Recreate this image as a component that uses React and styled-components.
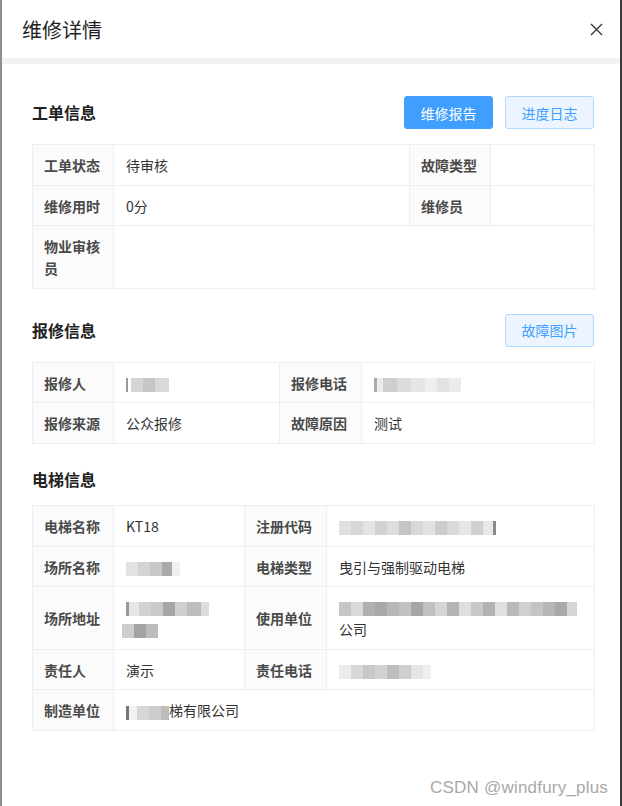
import React from 'react';
import styled, { createGlobalStyle } from 'styled-components';

const GlobalStyle = createGlobalStyle`
    html, body {
        margin: 0;
        padding: 0;
        background: #fff;
    }
    * {
        box-sizing: border-box;
    }
    body {
        font-family: "Noto Sans CJK SC", "Liberation Sans", sans-serif;
    }
`;

const Dialog = styled.div`
    position: relative;
    display: flex;
    flex-direction: column;
    width: 622px;
    height: 806px;
    border-left: 2px solid #8f8f8f;
    border-right: 2px solid #3a3a3a;
    background: #fff;
    overflow: hidden;
`;

const Header = styled.div`
    display: flex;
    align-items: center;
    justify-content: space-between;
    height: 58px;
    padding: 0 14px 0 20px;
`;

const Title = styled.div`
    font-size: 20px;
    color: #1f1f1f;
`;

const CloseButton = styled.button`
    display: flex;
    align-items: center;
    justify-content: center;
    width: 20px;
    height: 20px;
    padding: 0;
    border: none;
    background: transparent;
    color: #333;
    cursor: pointer;
`;

const Divider = styled.div`
    height: 6px;
    background: #f2f2f2;
`;

const Body = styled.div`
    display: flex;
    flex-direction: column;
    padding: 32px 26px 0 30px;
`;

const Section = styled.div`
    display: flex;
    flex-direction: column;
    gap: 15px;
    margin-top: ${props => props.first ? '0' : '25px'};
`;

const SectionHead = styled.div`
    display: flex;
    align-items: center;
    justify-content: space-between;
    min-height: ${props => props.withButtons ? '33px' : '21px'};
`;

const SectionTitle = styled.div`
    font-size: 16px;
    font-weight: 700;
    color: #222;
    line-height: 21px;
`;

const Actions = styled.div`
    display: flex;
    gap: 12px;
`;

const Button = styled.button`
    width: 89px;
    height: 33px;
    padding: 0;
    border-radius: 3px;
    font-family: inherit;
    font-size: 14px;
    cursor: pointer;
    border: 1px solid ${props => props.primary ? '#409eff' : '#b3d8ff'};
    background: ${props => props.primary ? '#409eff' : '#ecf5ff'};
    color: ${props => props.primary ? '#fff' : '#409eff'};
`;

const Table = styled.table`
    width: 100%;
    border-collapse: collapse;
    table-layout: fixed;
    font-size: 14px;
`;

const Label = styled.td`
    border: 1px solid #ebeef5;
    background: #fbfbfb;
    padding: 9px 11px 8.6px;
    line-height: 22px;
    color: #4a4a4a;
    font-weight: 600;
    vertical-align: middle;
    word-break: break-all;
`;

const Value = styled.td`
    border: 1px solid #ebeef5;
    background: #fff;
    padding: 9px 12px 8.6px;
    line-height: 22px;
    color: #333;
    vertical-align: middle;
    word-break: break-all;
`;

const Mosaic = styled.span`
    display: inline-flex;
    vertical-align: middle;
    height: ${props => props.h || 14}px;
    margin-left: ${props => props.offset || 0}px;
`;

const Pixel = styled.span`
    display: inline-block;
    height: 100%;
    width: ${props => props.w}px;
    background: ${props => props.shade};
`;

const Watermark = styled.div`
    position: absolute;
    right: 12px;
    bottom: 8px;
    font-family: "Liberation Sans", "Noto Sans", sans-serif;
    font-size: 17px;
    color: #a8a8a8;
    letter-spacing: 0.2px;
`;

function Blur({ cells, h, offset }) {
    return (
        <Mosaic h={h} offset={offset}>
            {cells.map(([w, shade], i) => (
                <Pixel key={i} w={w} shade={shade} />
            ))}
        </Mosaic>
    );
}

const CloseIcon = () => (
    <svg width="13" height="13" viewBox="0 0 13 13" fill="none" stroke="currentColor" strokeWidth="1.3">
        <path d="M1 1 L12 12 M12 1 L1 12" />
    </svg>
);

const Cols = ({ widths }) => (
    <colgroup>
        {widths.map((w, i) => <col key={i} style={{ width: w }} />)}
    </colgroup>
);

export default function App() {
    return (
        <>
            <GlobalStyle />
            <Dialog>
                <Header>
                    <Title>维修详情</Title>
                    <CloseButton><CloseIcon /></CloseButton>
                </Header>
                <Divider />
                <Body>
                    <Section first>
                        <SectionHead withButtons>
                            <SectionTitle>工单信息</SectionTitle>
                            <Actions>
                                <Button primary>维修报告</Button>
                                <Button>进度日志</Button>
                            </Actions>
                        </SectionHead>
                        <Table>
                            <Cols widths={[81, 296, 81, 104]} />
                            <tbody>
                                <tr>
                                    <Label>工单状态</Label>
                                    <Value>待审核</Value>
                                    <Label>故障类型</Label>
                                    <Value></Value>
                                </tr>
                                <tr>
                                    <Label>维修用时</Label>
                                    <Value>0分</Value>
                                    <Label>维修员</Label>
                                    <Value></Value>
                                </tr>
                                <tr>
                                    <Label>物业审核员</Label>
                                    <Value colSpan={3}></Value>
                                </tr>
                            </tbody>
                        </Table>
                    </Section>

                    <Section>
                        <SectionHead withButtons>
                            <SectionTitle>报修信息</SectionTitle>
                            <Actions>
                                <Button>故障图片</Button>
                            </Actions>
                        </SectionHead>
                        <Table>
                            <Cols widths={[81, 166, 82, 233]} />
                            <tbody>
                                <tr>
                                    <Label>报修人</Label>
                                    <Value>
                                        <Blur cells={[[2, '#9a9a9a'], [3, '#fff'], [12, '#d4d4d4'], [12, '#c6c6c6'], [14, '#d9d9d9']]} />
                                    </Value>
                                    <Label>报修电话</Label>
                                    <Value>
                                        <Blur cells={[[3, '#aaa'], [6, '#ececec'], [14, '#cfcfcf'], [14, '#dcdcdc'], [14, '#e6e6e6'], [12, '#eeeeee'], [12, '#e2e2e2'], [12, '#ebebeb']]} />
                                    </Value>
                                </tr>
                                <tr>
                                    <Label>报修来源</Label>
                                    <Value>公众报修</Value>
                                    <Label>故障原因</Label>
                                    <Value>测试</Value>
                                </tr>
                            </tbody>
                        </Table>
                    </Section>

                    <Section>
                        <SectionHead>
                            <SectionTitle>电梯信息</SectionTitle>
                        </SectionHead>
                        <Table>
                            <Cols widths={[81, 131, 82, 268]} />
                            <tbody>
                                <tr>
                                    <Label>电梯名称</Label>
                                    <Value>KT18</Value>
                                    <Label>注册代码</Label>
                                    <Value>
                                        <Blur cells={[[12, '#e0e0e0'], [12, '#d6d6d6'], [12, '#e4e4e4'], [12, '#d2d2d2'], [12, '#dedede'], [12, '#c4c4c4'], [12, '#d8d8d8'], [12, '#e2e2e2'], [12, '#cccccc'], [12, '#d9d9d9'], [12, '#e6e6e6'], [12, '#d0d0d0'], [10, '#e8e8e8'], [3, '#888']]} />
                                    </Value>
                                </tr>
                                <tr>
                                    <Label>场所名称</Label>
                                    <Value>
                                        <Blur cells={[[12, '#e2e2e2'], [12, '#d4d4d4'], [12, '#c8c8c8'], [10, '#a9a9a9'], [8, '#f0f0f0']]} />
                                    </Value>
                                    <Label>电梯类型</Label>
                                    <Value>曳引与强制驱动电梯</Value>
                                </tr>
                                <tr>
                                    <Label>场所地址</Label>
                                    <Value>
                                        <Blur cells={[[3, '#999'], [10, '#e6e6e6'], [12, '#d2d2d2'], [12, '#c9c9c9'], [12, '#a6a6a6'], [12, '#cfcfcf'], [14, '#bdbdbd'], [8, '#dcdcdc']]} />
                                        <br />
                                        <Blur offset={-4} cells={[[12, '#cdcdcd'], [12, '#a4a4a4'], [12, '#bcbcbc']]} />
                                    </Value>
                                    <Label>使用单位</Label>
                                    <Value>
                                        <Blur cells={[[12, '#c6c6c6'], [12, '#dadada'], [12, '#b0b0b0'], [12, '#a8a8a8'], [12, '#b8b8b8'], [12, '#c2c2c2'], [12, '#a6a6a6'], [12, '#c0c0c0'], [12, '#d4d4d4'], [12, '#b4b4b4'], [12, '#dedede'], [12, '#c8c8c8'], [12, '#b2b2b2'], [12, '#e0e0e0'], [12, '#bababa'], [12, '#d0d0d0'], [12, '#c4c4c4'], [12, '#b6b6b6'], [12, '#a9a9a9'], [10, '#d6d6d6']]} />
                                        <br />
                                        公司
                                    </Value>
                                </tr>
                                <tr>
                                    <Label>责任人</Label>
                                    <Value>演示</Value>
                                    <Label>责任电话</Label>
                                    <Value>
                                        <Blur cells={[[12, '#ececec'], [12, '#d8d8d8'], [12, '#c8c8c8'], [12, '#d2d2d2'], [12, '#bdbdbd'], [12, '#cfcfcf'], [12, '#e6e6e6'], [8, '#f0f0f0']]} />
                                    </Value>
                                </tr>
                                <tr>
                                    <Label>制造单位</Label>
                                    <Value colSpan={3}>
                                        <Blur cells={[[3, '#777'], [8, '#f2f2f2'], [12, '#d6d6d6'], [12, '#cdcdcd'], [8, '#bcbcbc']]} />
                                        梯有限公司
                                    </Value>
                                </tr>
                            </tbody>
                        </Table>
                    </Section>
                </Body>
                <Watermark>CSDN @windfury_plus</Watermark>
            </Dialog>
        </>
    );
}
